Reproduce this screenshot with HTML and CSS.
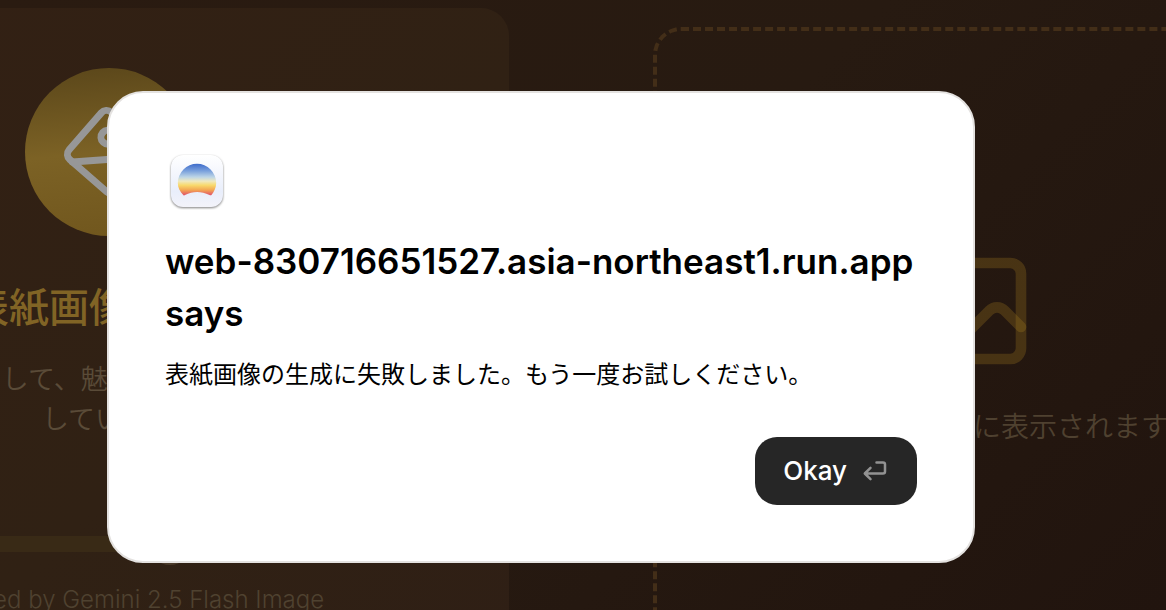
FILE: index.html
```html
<!DOCTYPE html>
<html lang="ja">
<head>
<meta charset="utf-8">
<title>表紙画像を生成</title>
<link rel="stylesheet" href="styles.css">
</head>
<body>
<main class="workspace">
  <section class="generator">
    <div class="badge">
      <svg class="badge-icon" viewBox="0 0 24 24" fill="none" stroke="#979797" stroke-width="2" stroke-linecap="round" stroke-linejoin="round" aria-hidden="true">
        <rect x="3" y="3" width="18" height="18" rx="2"/>
        <circle cx="9" cy="9" r="2"/>
        <path d="m21 15-3.086-3.086a2 2 0 0 0-2.828 0L6 21"/>
      </svg>
    </div>
    <h1 class="generator-title">表紙画像を生成</h1>
    <p class="generator-text">内容をもとにして、魅力的な表紙画像を生成<br>しています</p>
    <input class="progress" type="range" min="0" max="100" value="61" aria-label="進行状況">
    <p class="credit">AI Powered by Gemini 2.5 Flash Image</p>
  </section>
  <section class="preview">
    <svg class="preview-icon" viewBox="0 0 24 24" fill="none" stroke="#a98222" stroke-width="2" stroke-linecap="round" stroke-linejoin="round" stroke-opacity=".27" aria-hidden="true">
      <rect x="3" y="3" width="18" height="18" rx="2"/>
      <circle cx="9" cy="9" r="2"/>
      <path d="m21 15-3.086-3.086a2 2 0 0 0-2.828 0L6 21"/>
    </svg>
    <p class="preview-text">生成画像がここに表示されます</p>
  </section>
</main>
<dialog class="alert" open aria-labelledby="alert-title">
  <svg class="app-icon" viewBox="0 0 64 64" aria-hidden="true">
    <defs>
      <linearGradient id="tile" x1="0" y1="0" x2="0" y2="1">
        <stop offset="0" stop-color="#ffffff"/>
        <stop offset=".7" stop-color="#e9eefb"/>
        <stop offset="1" stop-color="#f3f3fa"/>
      </linearGradient>
      <linearGradient id="sky" x1="0" y1="0" x2="0" y2="1">
        <stop offset="0" stop-color="#3e6ccb"/>
        <stop offset=".22" stop-color="#789fdc"/>
        <stop offset=".42" stop-color="#bdd5e6"/>
        <stop offset=".55" stop-color="#efe9c0"/>
        <stop offset=".68" stop-color="#f8d96c"/>
        <stop offset=".83" stop-color="#f3a653"/>
        <stop offset="1" stop-color="#e04f6b"/>
      </linearGradient>
    </defs>
    <rect class="app-tile" x="6" y="6" width="52" height="52" rx="12" fill="url(#tile)"/>
    <path d="M18.500 46.200C15 43 12.800 38.600 12.800 34a19.200 19.200 0 0 1 38.400 0c0 4.600-2.200 9-4.700 11.900q-.8.800-2 .2C36 41.800 28 41.800 20 46.100q-.8.500-1.500.1z" fill="url(#sky)"/>
  </svg>
  <h2 class="alert-title" id="alert-title">web-830716651527.asia-northeast1.run.app says</h2>
  <p class="alert-message">表紙画像の生成に失敗しました。もう一度お試しください。</p>
  <button class="confirm" type="button">Okay
    <svg class="return-icon" viewBox="0 0 24 20" fill="none" stroke="#929292" stroke-width="2.500" stroke-linecap="round" stroke-linejoin="round" aria-hidden="true">
      <path d="M13.500 1.500H20a2 2 0 0 1 2 2v7a2 2 0 0 1-2 2H2M7.500 6.800 1.800 12.500l5.700 5.700"/>
    </svg>
  </button>
</dialog>
</body>
</html>
```
FILE: styles.css
```css
* {
  box-sizing: border-box;
}

body {
  margin: 0;
  height: 100vh;
  overflow: hidden;
  position: relative;
  background: linear-gradient(135deg, #2a1b11, #271a11 50%, #21140e);
  font-family: Inter, "Noto Sans CJK JP", sans-serif;
}

h1, h2, p {
  margin: 0;
}

.workspace {
  display: grid;
  grid-template-columns: 800px 640px;
  gap: 144px;
  align-items: start;
  margin-left: -291px;
}

.generator {
  display: flex;
  flex-direction: column;
  align-items: center;
  margin-top: 8px;
  padding: 60px 56px;
  border-radius: 28px;
  background: linear-gradient(135deg, #332014, #302114 60%, #2f1f15);
  text-align: center;
}

.badge {
  display: grid;
  place-items: center;
  width: 168px;
  height: 168px;
  border-radius: 50%;
  background: linear-gradient(175deg, #5a461a, #7c6225 50%, #70561d);
}

.badge-icon {
  width: 84px;
  height: 84px;
  transform: rotate(41deg);
}

.generator-title {
  margin-top: 40px;
  color: #816425;
  font-size: 40px;
  font-weight: 500;
  line-height: 64px;
}

.generator-text {
  margin-top: 20px;
  color: #5a4b38;
  font-size: 27px;
  font-weight: 350;
  line-height: 40px;
}

.progress {
  appearance: none;
  width: 600px;
  height: 42px;
  margin: 83px 0 0;
  background: none;
}

.progress::-webkit-slider-runnable-track {
  height: 16px;
  border-radius: 8px;
  background: #392a16;
}

.progress::-webkit-slider-thumb {
  appearance: none;
  width: 42px;
  height: 42px;
  margin-top: -13px;
  border-radius: 50%;
  background: #4a3a2a;
}

.credit {
  margin-top: 17px;
  color: #4f4230;
  font-size: 24px;
  font-weight: 350;
  line-height: 36px;
}

.preview {
  display: flex;
  flex-direction: column;
  align-items: center;
  gap: 32px;
  margin-top: 27px;
  padding: 216px 0;
  border: 4px dashed #432e18;
  border-radius: 28px;
}

.preview-icon {
  width: 128px;
  height: 128px;
}

.preview-text {
  color: #4f4130;
  font-size: 28px;
  font-weight: 350;
  line-height: 40px;
}

.alert {
  position: absolute;
  top: 91px;
  left: 107px;
  width: 868px;
  max-width: calc(100% - 214px);
  margin: 0;
  padding: 56px;
  display: flex;
  flex-direction: column;
  border: 2px solid #e4e2e0;
  border-radius: 36px;
  background: #fff;
  color: #000;
}

.app-icon {
  width: 64px;
  height: 64px;
}

.app-tile {
  filter: drop-shadow(0 1px 1px rgba(0, 0, 0, .5));
}

.alert-title {
  margin-top: 22px;
  font-size: 35px;
  font-weight: 600;
  line-height: 52px;
}

.alert-message {
  margin-top: 18px;
  font-size: 24px;
  font-weight: 400;
  line-height: 36px;
}

.confirm {
  align-self: flex-end;
  display: flex;
  align-items: center;
  gap: 16px;
  margin-top: 44px;
  padding: 16px 30px 16px 28px;
  border: 0;
  border-radius: 22px;
  background: #262626;
  color: #fff;
  font-family: inherit;
  font-size: 26px;
  font-weight: 500;
  line-height: 36px;
}

.return-icon {
  width: 24px;
  height: 20px;
}
```
